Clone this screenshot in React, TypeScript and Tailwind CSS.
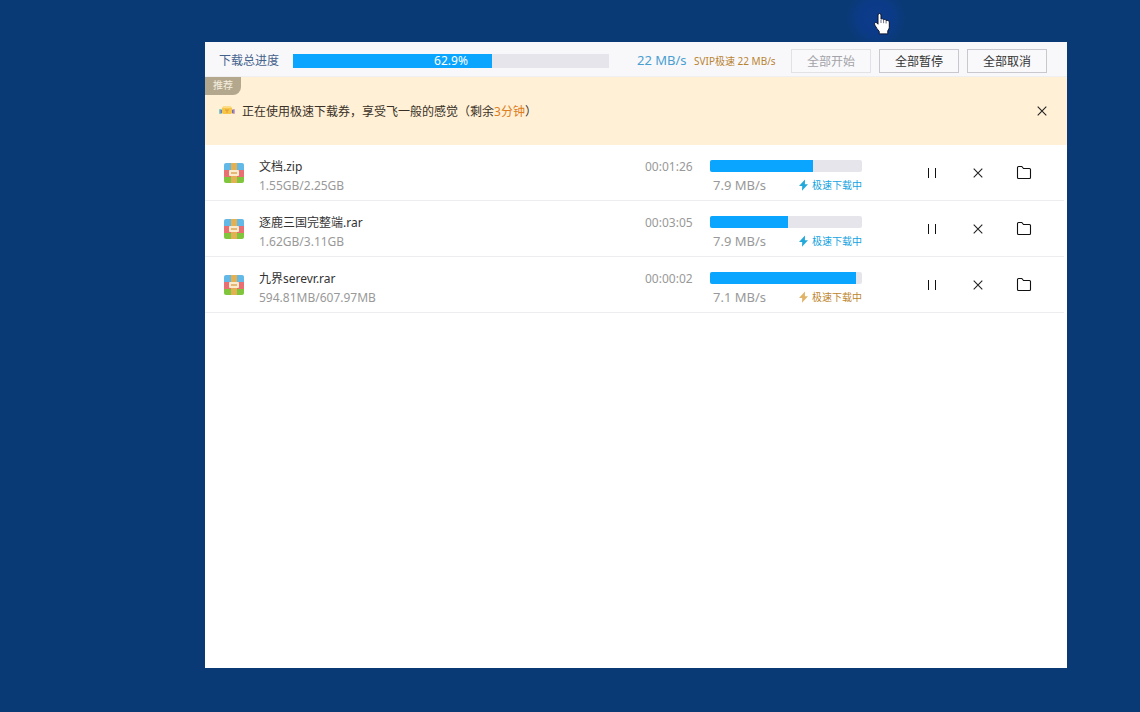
import React, { useState } from 'react'

interface DownloadTask {
  id: number
  name: string
  size: string
  remaining: string
  progress: number
  speed: string
  tone: 'blue' | 'gold'
}

const tasks: DownloadTask[] = [
  { id: 1, name: '文档.zip', size: '1.55GB/2.25GB', remaining: '00:01:26', progress: 68, speed: '7.9 MB/s', tone: 'blue' },
  { id: 2, name: '逐鹿三国完整端.rar', size: '1.62GB/3.11GB', remaining: '00:03:05', progress: 51, speed: '7.9 MB/s', tone: 'blue' },
  { id: 3, name: '九界serevr.rar', size: '594.81MB/607.97MB', remaining: '00:00:02', progress: 96, speed: '7.1 MB/s', tone: 'gold' }
]

function ArchiveIcon() {
  return (
    <svg className="h-[22px] w-[22px] shrink-0" viewBox="0 0 22 22" aria-hidden="true">
      <path d="M3 1h16a2 2 0 0 1 2 2v5H1V3a2 2 0 0 1 2-2Z" fill="#62b9e8" />
      <rect x="1" y="8" width="20" height="7" fill="#ea6f72" />
      <path d="M1 15h20v4a2 2 0 0 1-2 2H3a2 2 0 0 1-2-2Z" fill="#7fc63c" />
      <rect x="8" y="1" width="6" height="20" fill="#e3b052" />
      <rect x="6" y="8" width="10" height="6" rx="1" fill="#fbeccd" />
      <rect x="8" y="10" width="6" height="2" fill="#e6b878" />
    </svg>
  )
}

function CouponIcon() {
  return (
    <svg className="h-3 w-4 shrink-0" viewBox="0 0 16 12" aria-hidden="true">
      <rect x="0" y="4" width="3" height="5" rx="1" fill="#7fcac4" />
      <rect x="1.5" y="5" width="2" height="3" fill="#7a78b8" />
      <rect x="13" y="4" width="3" height="5" rx="1" fill="#d0a0b4" />
      <rect x="12.5" y="5" width="2" height="3" fill="#6a71b4" />
      <path d="M5 1h6l2 2v5l-1 1H4L3 8V3Z" fill="#f6c648" />
      <path d="M5 1h6l1 2H4Z" fill="#fbdc84" />
      <path d="M6 4.500h4v1H6ZM7.500 4.500h1v3.500h-1Z" fill="#e5982e" />
    </svg>
  )
}

function BoltIcon() {
  return (
    <svg className="h-3 w-[9px] shrink-0" viewBox="0 0 9 12" fill="currentColor" aria-hidden="true">
      <path d="M6 0.500 0 7h3.200L3 11.800 9 5.200H5.900Z" />
    </svg>
  )
}

function PauseIcon() {
  return (
    <svg className="h-4 w-4" viewBox="0 0 16 16" aria-hidden="true">
      <path d="M4.5 3v10M11.5 3v10" stroke="#111" strokeWidth="1" />
    </svg>
  )
}

function CloseIcon() {
  return (
    <svg className="h-4 w-4" viewBox="0 0 16 16" aria-hidden="true">
      <path d="M3.7 3.7l8.600 8.600M12.300 3.700l-8.600 8.600" stroke="#222" strokeWidth="1.1" />
    </svg>
  )
}

function FolderIcon() {
  return (
    <svg className="h-4 w-4" viewBox="0 0 16 16" fill="none" aria-hidden="true">
      <path
        d="M1.5 2.5a1 1 0 0 1 1-1h3.300L7.500 3.500h6a1 1 0 0 1 1 1v8a1 1 0 0 1-1 1h-11a1 1 0 0 1-1-1Z"
        stroke="#111"
        strokeWidth="1.1"
      />
    </svg>
  )
}

function Pointer() {
  return (
    <div className="pointer-events-none absolute top-0 left-[846px] h-[42px] w-[62px] bg-[radial-gradient(circle_at_30px_18px,#0b3b8a_0,#0b3b88_16px,transparent_30px)]">
      <svg className="absolute top-[13px] left-7 h-[22px] w-4" viewBox="0 0 16 22" aria-hidden="true">
        <path
          d="M4 2a1.500 1.500 0 0 1 3 0V6c1-.5 2.300-.2 2.600.7.9-.5 2.200-.2 2.500.8 1.200-.4 3.200-.1 3.200 1.500v5.300c0 1.500-1.200 2.400-1.500 3.600v3H5.200v-2.500c-1.500-1.500-2.800-3.500-4.200-6-.8-1.600-.5-2.700.5-2.900 1-.1 1.800.7 2.500 1.700Z"
          fill="#fff"
          stroke="#0a1230"
          strokeWidth="1"
        />
        <path d="M7 6.500v3.500M9.600 7v3.200M12.100 8v2.500" stroke="#0a1230" strokeWidth="0.600" />
      </svg>
    </div>
  )
}

function TaskRow({ task }: { task: DownloadTask }) {
  const actionClass = 'flex h-4 w-4 cursor-pointer items-center justify-center'

  return (
    <li className="mr-[3px] flex h-14 items-center border-b border-[#ededf0] pr-8 pl-[18px]">
      <ArchiveIcon />
      <div className="ml-[14px] flex min-w-0 flex-1 flex-col gap-px pt-2 leading-[18px]">
        <span className="truncate text-[#333]">{task.name}</span>
        <span className="text-[#999]">{task.size}</span>
      </div>
      <span className="mb-3 w-[65px] leading-[18px] text-[#999]">{task.remaining}</span>
      <div className="w-[152px] pt-2">
        <div
          role="progressbar"
          aria-label={task.name}
          aria-valuenow={task.progress}
          className="h-3 overflow-hidden rounded-xs bg-[#e5e5eb]"
        >
          <div className="h-full bg-[#09a5ff]" style={{ width: `${task.progress}%` }} />
        </div>
        <div className="mt-1 flex items-center justify-between pl-[3px] leading-[18px]">
          <span className="text-[13px] text-[#999]">{task.speed}</span>
          <span
            className={`flex items-center gap-1 text-[10px] ${
              task.tone === 'blue' ? 'text-[#14a3df]' : 'text-[#bd862c]'
            }`}
          >
            <span className={task.tone === 'blue' ? 'text-[#22a9dc]' : 'text-[#e0b466]'}>
              <BoltIcon />
            </span>
            极速下载中
          </span>
        </div>
      </div>
      <div className="ml-[62px] flex items-center gap-[30px]">
        <button type="button" aria-label="暂停" className={actionClass}>
          <PauseIcon />
        </button>
        <button type="button" aria-label="取消" className={actionClass}>
          <CloseIcon />
        </button>
        <button type="button" aria-label="打开文件夹" className={actionClass}>
          <FolderIcon />
        </button>
      </div>
    </li>
  )
}

export default function App() {
  const [bannerOpen, setBannerOpen] = useState(true)
  const total = 62.9
  const buttonClass = 'h-6 w-20 border border-[#c8c8ce] bg-[#f9f9fb] pt-px text-[#333] disabled:border-[#e1e1e6] disabled:text-[#a3a3a8]'

  return (
    <div className="relative flex min-h-screen bg-[#0a3a75] pt-[42px] pr-[73px] pb-11 pl-[205px] font-['Noto_Sans','Noto_Sans_CJK_SC',sans-serif] text-xs">
      <main className="flex min-w-0 flex-1 flex-col bg-white">
        {/* Total progress */}
        <header className="flex h-[35px] items-center border-b border-[#efeff2] bg-[#f8f8fb] pt-1 pr-5 pl-[14px]">
          <span className="w-[74px] text-[#45628c]">下载总进度</span>
          <div
            role="progressbar"
            aria-label="下载总进度"
            aria-valuenow={total}
            className="relative h-[14px] flex-1 bg-[#e5e5eb]"
          >
            <div className="h-full bg-[#09a5ff]" style={{ width: `${total}%` }} />
            <span className="absolute inset-0 flex items-center justify-center text-white">{total}%</span>
          </div>
          <span className="ml-7 w-[57px] text-[13px] whitespace-nowrap text-[#4a9fd0]">22 MB/s</span>
          <span className="w-[97px] pt-px text-[10px] whitespace-nowrap text-[#b98432]">SVIP极速 22 MB/s</span>
          <div className="flex gap-2">
            <button type="button" disabled className={buttonClass}>全部开始</button>
            <button type="button" className={buttonClass}>全部暂停</button>
            <button type="button" className={buttonClass}>全部取消</button>
          </div>
        </header>

        {/* Coupon banner */}
        {bannerOpen && (
          <section className="relative flex h-[68px] items-center bg-[#fff0d6] pr-[17px] pl-[14px]">
            <span className="absolute top-0 left-0 flex h-[18px] w-9 items-center justify-center rounded-br-lg bg-[#b3a88e] text-[10px] text-[#f5eedf]">
              推荐
            </span>
            <CouponIcon />
            <p className="ml-[7px] flex-1 pt-0.5 text-[#3a3027]">
              正在使用极速下载券，享受飞一般的感觉（剩余<span className="text-[#dd7d1b]">3分钟</span>）
            </p>
            <button type="button" aria-label="关闭" className="cursor-pointer" onClick={() => setBannerOpen(false)}>
              <CloseIcon />
            </button>
          </section>
        )}

        <ul>
          {tasks.map((task) => (
            <TaskRow key={task.id} task={task} />
          ))}
        </ul>
      </main>
      <Pointer />
    </div>
  )
}
